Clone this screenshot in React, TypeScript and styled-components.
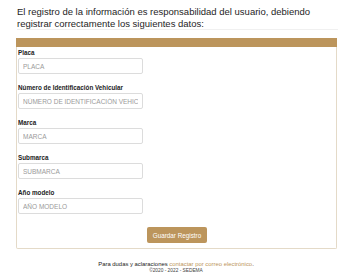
import React from 'react';
import styled, { createGlobalStyle } from 'styled-components';

const gold = '#bc955c';

const GlobalStyle = createGlobalStyle`
  body {
    margin: 0;
    background: #ffffff;
    font-family: 'Liberation Sans', Arial, sans-serif;
    color: #222222;
  }
`;

const Page = styled.div`
  width: 350px;
  padding: 6px 12px 0 16px;
  box-sizing: border-box;
`;

const Intro = styled.p`
  margin: 0 0 8px 1px;
  padding-bottom: 0;
  font-size: 9.5px;
  line-height: 11.5px;
  border-bottom: 1px solid #f0f0f0;
  color: #1e1e1e;
`;

const Card = styled.div`
  width: 321px;
  border: 1px solid #e4dac8;
  border-top: none;
  border-radius: 0 0 2px 2px;
  box-sizing: border-box;
`;

const CardHeader = styled.div`
  height: 9px;
  background: ${gold};
  margin: 0 -1px;
`;

const CardBody = styled.form`
  display: flex;
  flex-direction: column;
  padding: 2px 0 5px 1px;
`;

const Field = styled.div`
  display: flex;
  flex-direction: column;
  gap: 1px;
  margin-bottom: 10px;
`;

const Label = styled.label`
  font-size: 6.3px;
  font-weight: bold;
  line-height: 8px;
  color: #222222;
`;

const Input = styled.input`
  width: 125px;
  height: 16px;
  box-sizing: border-box;
  border: 1px solid #dcdcdc;
  border-radius: 2px;
  padding: 0 4px;
  font-family: 'Liberation Sans', Arial, sans-serif;
  font-size: 6.5px;
  text-transform: uppercase;
  outline: none;
  &::placeholder {
    color: #9a9a9a;
  }
`;

const Actions = styled.div`
  display: flex;
  justify-content: center;
  padding: 3px 0 0;
`;

const Button = styled.button`
  width: 60px;
  height: 16px;
  padding: 0;
  border: none;
  border-radius: 2px;
  background: ${gold};
  color: #ffffff;
  font-family: 'Liberation Sans', Arial, sans-serif;
  font-size: 6.3px;
`;

const Footer = styled.footer`
  display: flex;
  flex-direction: column;
  align-items: center;
  padding-top: 11px;
  margin-left: -2px;
`;

const FooterLine = styled.div`
  font-size: 5.9px;
  line-height: 8px;
  color: #222222;
  a {
    color: ${gold};
    text-decoration: none;
  }
`;

const Copy = styled.div`
  font-size: 4.8px;
  line-height: 6px;
  color: #444444;
`;

const fields = [
  { label: 'Placa', placeholder: 'PLACA' },
  { label: 'Número de Identificación Vehicular', placeholder: 'NÚMERO DE IDENTIFICACIÓN VEHICULAR' },
  { label: 'Marca', placeholder: 'MARCA' },
  { label: 'Submarca', placeholder: 'SUBMARCA' },
  { label: 'Año modelo', placeholder: 'AÑO MODELO' },
];

export default function App() {
  return (
    <Page>
      <GlobalStyle />
      <Intro>
        El registro de la información es responsabilidad del usuario, debiendo registrar correctamente los
        siguientes datos:
      </Intro>
      <Card>
        <CardHeader />
        <CardBody onSubmit={(e) => e.preventDefault()}>
          {fields.map((f) => (
            <Field key={f.label}>
              <Label>{f.label}</Label>
              <Input placeholder={f.placeholder} />
            </Field>
          ))}
          <Actions>
            <Button type="submit">Guardar Registro</Button>
          </Actions>
        </CardBody>
      </Card>
      <Footer>
        <FooterLine>
          Para dudas y aclaraciones <a href="#">contactar por correo electrónico</a>.
        </FooterLine>
        <Copy>©2020 - 2022 - SEDEMA</Copy>
      </Footer>
    </Page>
  );
}
